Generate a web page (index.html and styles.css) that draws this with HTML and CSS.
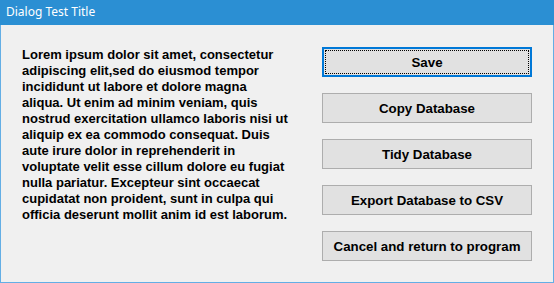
FILE: index.html
```html
<!DOCTYPE html>
<html>
<head>
<meta charset="utf-8">
<link rel="stylesheet" href="styles.css">
</head>
<body>
<div class="window">
  <div class="titlebar">Dialog Test Title</div>
  <div class="content">
    <p class="message">Lorem ipsum dolor sit amet, consectetur<br>adipiscing elit,sed do eiusmod tempor<br>incididunt ut labore et dolore magna<br>aliqua. Ut enim ad minim veniam, quis<br>nostrud exercitation ullamco laboris nisi ut<br>aliquip ex ea commodo consequat. Duis<br>aute irure dolor in reprehenderit in<br>voluptate velit esse cillum dolore eu fugiat<br>nulla pariatur. Excepteur sint occaecat<br>cupidatat non proident, sunt in culpa qui<br>officia deserunt mollit anim id est laborum.</p>
    <div class="buttons">
      <button class="btn default">Save</button>
      <button class="btn">Copy Database</button>
      <button class="btn">Tidy Database</button>
      <button class="btn">Export Database to CSV</button>
      <button class="btn">Cancel and return to program</button>
    </div>
  </div>
</div>
</body>
</html>
```
FILE: styles.css
```css
html, body {
  margin: 0;
  padding: 0;
}
body {
  width: 554px;
  height: 283px;
  overflow: hidden;
  background: #f0f0f0;
}
.window {
  box-sizing: border-box;
  width: 554px;
  height: 283px;
  border: 1px solid #63aee5;
  border-top: none;
  background: #f0f0f0;
  display: flex;
  flex-direction: column;
}
.titlebar {
  height: 25px;
  margin: 0 -1px;
  background: #2b8fd3;
  color: #ffffff;
  font-family: "Noto Sans", "Open Sans", sans-serif;
  font-size: 12px;
  line-height: 24px;
  padding-left: 6px;
}
.content {
  display: flex;
  flex-direction: row;
  justify-content: space-between;
  padding: 22px 21px 0 21px;
}
.message {
  margin: 0;
  font-family: "Liberation Sans", Arial, sans-serif;
  font-weight: bold;
  font-size: 13px;
  line-height: 16px;
  color: #000;
  white-space: nowrap;
}
.buttons {
  display: flex;
  flex-direction: column;
  gap: 16px;
}
.btn {
  position: relative;
  box-sizing: border-box;
  width: 210px;
  height: 30px;
  margin: 0;
  padding: 0;
  background: #e1e1e1;
  border: 1px solid #adadad;
  font-family: "Liberation Sans", Arial, sans-serif;
  font-weight: bold;
  font-size: 13.3px;
  color: #000;
  text-align: center;
}
.btn.default {
  border: 2px solid #0078d7;
}
.btn.default::after {
  content: "";
  position: absolute;
  top: 1px;
  left: 1px;
  right: 1px;
  bottom: 1px;
  border: 1px dotted #000;
}
```
